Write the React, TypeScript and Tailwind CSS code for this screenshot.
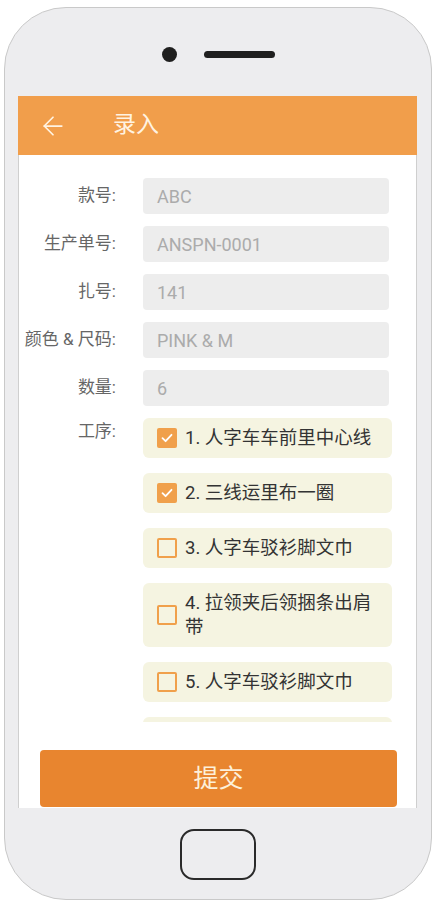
import React from "react";
import { ArrowLeft } from "lucide-react";

const fields = [
  { label: "款号:", value: "ABC" },
  { label: "生产单号:", value: "ANSPN-0001" },
  { label: "扎号:", value: "141" },
  { label: "颜色 & 尺码:", value: "PINK & M" },
  { label: "数量:", value: "6" },
];

const steps = [
  { text: "1. 人字车车前里中心线", checked: true },
  { text: "2. 三线运里布一圈", checked: true },
  { text: "3. 人字车驳衫脚文巾", checked: false },
  { text: "4. 拉领夹后领捆条出肩带", checked: false },
  { text: "5. 人字车驳衫脚文巾", checked: false },
];

const CheckBox = ({ checked }: { checked: boolean }) => {
  if (checked) {
    return (
      <div className="w-[20px] h-[20px] shrink-0 rounded-[2px] bg-[#f0a04b] flex items-center justify-center">
        <svg width="14" height="14" viewBox="0 0 14 14" fill="none">
          <path d="M2.5 7.2 L5.6 10.2 L11.5 3.8" stroke="#fff" strokeWidth="1.8" strokeLinecap="round" strokeLinejoin="round" />
        </svg>
      </div>
    );
  }
  return <div className="w-[20px] h-[20px] shrink-0 rounded-[2px] border-2 border-[#f0a04b]"></div>;
};

const App = () => {
  return (
    <div className="w-[442px] h-[908px] bg-white pt-[7px] pl-[4px] font-['Roboto','Noto_Sans_CJK_SC',sans-serif]">
      <div className="w-[428px] h-[893px] rounded-[62px] border border-[#c9c9c9] bg-[#ededef] pl-[13px] flex flex-col">
        {/* camera + speaker */}
        <div className="h-[16px] mt-[38px] mb-[34px] flex items-center justify-center gap-[27px] pr-[13px]">
          <div className="w-[15px] h-[15px] rounded-full bg-[#1f1f1f]"></div>
          <div className="w-[71px] h-[7px] rounded-full bg-[#1f1f1f]"></div>
        </div>

        {/* screen */}
        <div className="w-[399px] h-[712px] bg-white flex flex-col">
          <div className="h-[59px] shrink-0 bg-[#f19e4b] flex items-center">
            <ArrowLeft className="ml-[20px] text-[#fff3e2]" size={30} strokeWidth={1.4} />
            <h1 className="ml-[45px] text-[23px] text-[#fff3e2]">录入</h1>
          </div>

          <div className="flex-1 border-x border-[#cfcfcf] flex flex-col">
            <div className="h-[567px] overflow-hidden pt-[23px]">
              <div className="flex flex-col gap-[12px]">
                {fields.map((f) => (
                  <div key={f.label} className="flex items-center">
                    <div className="w-[97px] text-right text-[17px] text-[#666] whitespace-nowrap">{f.label}</div>
                    <div className="ml-[27px] w-[246px] h-[36px] rounded-[4px] bg-[#ededed] flex items-center pl-[14px] text-[18px] text-[#ababab]">
                      {f.value}
                    </div>
                  </div>
                ))}

                <div className="flex items-start">
                  <div className="w-[97px] pt-[1px] text-right text-[17px] leading-[24px] text-[#666]">工序:</div>
                  <div className="ml-[27px] w-[249px] flex flex-col gap-[15px]">
                    {steps.map((s, i) => (
                      <div key={i} className="rounded-[6px] bg-[#f5f4e1] py-[8px] pl-[14px] pr-[14px] flex items-center gap-[8px]">
                        <CheckBox checked={s.checked} />
                        <span className="text-[18.5px] leading-[24px] text-[#333]">{s.text}</span>
                      </div>
                    ))}
                    {/* next step, scrolled out of view */}
                    <div className="h-[40px] rounded-[6px] bg-[#f5f4e1]"></div>
                  </div>
                </div>
              </div>
            </div>

            <button className="mt-[28px] ml-[21px] w-[357px] h-[57px] shrink-0 rounded-[4px] bg-[#e8852f] text-[25px] text-[#fdf0da]">
              提交
            </button>
          </div>
        </div>

        {/* home button */}
        <div className="mt-[21px] pr-[13px] flex justify-center">
          <div className="w-[76px] h-[51px] rounded-[14px] border-2 border-[#2a2a2a]"></div>
        </div>
      </div>
    </div>
  );
};

export default App;
